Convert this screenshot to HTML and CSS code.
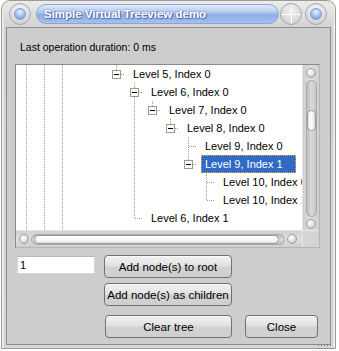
FILE: index.html
```html
<!DOCTYPE html>
<html lang="en">
<head>
    <meta charset="UTF-8">
    <title>Simple Virtual Treeview demo</title>
    <link rel="stylesheet" href="styles.css">
</head>
<body>
    <div class="window">
        <div class="titlebar">
            <span class="orb"></span>
            <div class="caption">Simple Virtual Treeview demo</div>
            <span class="orb cross"></span>
            <span class="orb"></span>
        </div>

        <div class="client">
            <p class="status">Last operation duration: 0 ms</p>

            <div class="treebox">
                <div class="tree">
                    <div class="row">
                        <span class="c v"></span><span class="c v"></span><span class="c v"></span><span class="c"></span><span class="c"></span>
                        <span class="c ell"><span class="exp"></span></span>
                        <span class="label">Level 5, Index 0</span>
                    </div>
                    <div class="row">
                        <span class="c v"></span><span class="c v"></span><span class="c v"></span><span class="c"></span><span class="c"></span><span class="c"></span>
                        <span class="c tee"><span class="exp"></span></span>
                        <span class="label">Level 6, Index 0</span>
                    </div>
                    <div class="row">
                        <span class="c v"></span><span class="c v"></span><span class="c v"></span><span class="c"></span><span class="c"></span><span class="c"></span><span class="c v"></span>
                        <span class="c ell"><span class="exp"></span></span>
                        <span class="label">Level 7, Index 0</span>
                    </div>
                    <div class="row">
                        <span class="c v"></span><span class="c v"></span><span class="c v"></span><span class="c"></span><span class="c"></span><span class="c"></span><span class="c v"></span><span class="c"></span>
                        <span class="c ell"><span class="exp"></span></span>
                        <span class="label">Level 8, Index 0</span>
                    </div>
                    <div class="row">
                        <span class="c v"></span><span class="c v"></span><span class="c v"></span><span class="c"></span><span class="c"></span><span class="c"></span><span class="c v"></span><span class="c"></span><span class="c"></span>
                        <span class="c tee"></span>
                        <span class="label">Level 9, Index 0</span>
                    </div>
                    <div class="row">
                        <span class="c v"></span><span class="c v"></span><span class="c v"></span><span class="c"></span><span class="c"></span><span class="c"></span><span class="c v"></span><span class="c"></span><span class="c"></span>
                        <span class="c ell"><span class="exp"></span></span>
                        <span class="label sel">Level 9, Index 1</span>
                    </div>
                    <div class="row">
                        <span class="c v"></span><span class="c v"></span><span class="c v"></span><span class="c"></span><span class="c"></span><span class="c"></span><span class="c v"></span><span class="c"></span><span class="c"></span><span class="c"></span>
                        <span class="c tee"></span>
                        <span class="label">Level 10, Index 0</span>
                    </div>
                    <div class="row">
                        <span class="c v"></span><span class="c v"></span><span class="c v"></span><span class="c"></span><span class="c"></span><span class="c"></span><span class="c v"></span><span class="c"></span><span class="c"></span><span class="c"></span>
                        <span class="c ell"></span>
                        <span class="label">Level 10, Index 1</span>
                    </div>
                    <div class="row">
                        <span class="c v"></span><span class="c v"></span><span class="c v"></span><span class="c"></span><span class="c"></span><span class="c"></span>
                        <span class="c ell"></span>
                        <span class="label">Level 6, Index 1</span>
                    </div>
                    <div class="row">
                        <span class="c v"></span><span class="c v"></span><span class="c v"></span>
                    </div>
                </div>

                <div class="vscroll">
                    <span class="knob"></span>
                    <div class="track">
                        <span class="thumb"></span>
                    </div>
                    <span class="knob"></span>
                </div>

                <div class="hscroll">
                    <span class="knob"></span>
                    <div class="track">
                        <span class="thumb"></span>
                    </div>
                    <span class="knob"></span>
                </div>

                <div class="corner"></div>
            </div>

            <div class="controls">
                <input class="count" type="text" value="1">
                <button class="btn">Add node(s) to root</button>
                <button class="btn children">Add node(s) as children</button>
                <button class="btn clear">Clear tree</button>
                <button class="btn close">Close</button>
            </div>
        </div>

        <span class="grip"></span>
    </div>
</body>
</html>
```

FILE: styles.css
```css
body {
    margin: 0;
    background: #ffffff;
    font-family: 'Liberation Sans', Arial, sans-serif;
    font-size: 11px;
    color: #000;
}

.window {
    position: relative;
    box-sizing: border-box;
    width: 335px;
    height: 349px;
    margin-left: 1px;
    padding: 0 4px 4px 4px;
    border: 1px solid #9c9c9c;
    border-radius: 9px 9px 0 0;
    background: linear-gradient(#ececec 0, #d2d2d2 27px, #d6d6d6 100%);
    box-shadow: inset 1px 0 0 #f0f0f0, inset -1px 0 0 #f0f0f0, inset 2px 0 0 #e2e2e2, inset -2px 0 0 #e2e2e2;
}

/* title bar */

.titlebar {
    display: flex;
    align-items: center;
    height: 26px;
    padding-left: 3px;
}

.orb {
    position: relative;
    box-sizing: border-box;
    width: 22px;
    height: 22px;
    border-radius: 50%;
    border: 1px solid #a9a9a9;
    background: radial-gradient(circle at 50% 35%, #fafafa 0, #dcdcdc 60%, #bdbdbd 100%);
    flex: none;
}

.orb::after {
    content: "";
    position: absolute;
    left: 4px;
    top: 4px;
    width: 12px;
    height: 12px;
    border-radius: 50%;
    border: 1px solid #7f9ccd;
    box-sizing: border-box;
    background: radial-gradient(circle at 50% 30%, #eef4fe 0, #a9c4ef 45%, #6d93d6 100%);
}

.orb.cross {
    margin-left: 1px;
    margin-right: 3px;
    background:
        linear-gradient(#ffffff, #ffffff) 10px 0 / 1px 100% no-repeat,
        linear-gradient(#ffffff, #ffffff) 0 10px / 100% 1px no-repeat,
        radial-gradient(circle at 50% 35%, #f4f4f4 0, #dadada 60%, #c2c2c2 100%);
}

.orb.cross::after {
    display: none;
}

.caption {
    box-sizing: border-box;
    width: 243px;
    height: 20px;
    margin-left: 5px;
    padding-left: 7px;
    border: 1px solid #8da5cf;
    border-radius: 10px;
    background: linear-gradient(#e2ebfa 0%, #b4c9ee 40%, #8eaee6 55%, #a6c0f0 100%);
    color: #ffffff;
    font-weight: bold;
    font-size: 11.5px;
    line-height: 18px;
    text-shadow: 0 0 2px #4a6aa8, 1px 1px 1px #4a6aa8;
    white-space: nowrap;
}

/* client area */

.client {
    box-sizing: border-box;
    height: 318px;
    border: 1px solid #8c8c8c;
    background: #cdcdcd;
}

.status {
    margin: 0;
    padding: 12px 0 0 13px;
    font-size: 10.5px;
    line-height: 14px;
}

.treebox {
    display: grid;
    grid-template-columns: 1fr 17px;
    grid-template-rows: 165px 17px;
    box-sizing: border-box;
    width: 305px;
    height: 184px;
    margin: 10px 0 0 8px;
    border: 1px solid #8a8a8a;
    border-right-color: #b4b4b4;
    border-bottom-color: #b4b4b4;
}

.tree {
    background: #ffffff;
    padding-left: 1px;
    overflow: hidden;
}

.row {
    display: flex;
    height: 18px;
    white-space: nowrap;
}

.c {
    flex: none;
    width: 18px;
    height: 18px;
    background-repeat: no-repeat;
}

.v {
    background-image: repeating-linear-gradient(to bottom, #a29d89 0 1px, transparent 1px 2px);
    background-size: 1px 18px;
    background-position: 9px 0;
}

.tee {
    background-image:
        repeating-linear-gradient(to bottom, #a29d89 0 1px, transparent 1px 2px),
        repeating-linear-gradient(to right, #a29d89 0 1px, transparent 1px 2px);
    background-size: 1px 18px, 8px 1px;
    background-position: 9px 0, 10px 9px;
}

.ell {
    background-image:
        repeating-linear-gradient(to bottom, #a29d89 0 1px, transparent 1px 2px),
        repeating-linear-gradient(to right, #a29d89 0 1px, transparent 1px 2px);
    background-size: 1px 10px, 8px 1px;
    background-position: 9px 0, 10px 9px;
}

.exp {
    display: block;
    box-sizing: border-box;
    width: 9px;
    height: 9px;
    margin: 5px 0 0 5px;
    border: 1px solid #9c9a8a;
    background: #ffffff;
    padding: 3px 0 0 1px;
}

.exp::after {
    content: "";
    display: block;
    width: 5px;
    height: 1px;
    background: #000000;
}

.label {
    margin-left: 4px;
    padding: 0 13px 0 4px;
    line-height: 18px;
    box-sizing: border-box;
    height: 18px;
}

.label.sel {
    background: #316ac5;
    color: #ffffff;
    outline: 1px dotted #f2b443;
    outline-offset: -1px;
}

/* scroll bars */

.vscroll {
    display: flex;
    flex-direction: column;
    align-items: center;
    gap: 2px;
    padding-top: 3px;
    background: linear-gradient(to right, #cfcfcf, #dedede 50%, #cfcfcf);
    border-left: 1px solid #e6e6e6;
}

.hscroll {
    display: flex;
    align-items: center;
    gap: 2px;
    padding: 0 5px 0 3px;
    background: linear-gradient(#cfcfcf, #e0e0e0 50%, #cfcfcf);
    border-top: 1px solid #e6e6e6;
}

.knob {
    flex: none;
    box-sizing: border-box;
    width: 10px;
    height: 10px;
    border-radius: 50%;
    border: 1px solid #9e9e9e;
    background: radial-gradient(circle at 40% 35%, #ffffff 0, #e4e4e4 45%, #b2b2b2 100%);
}

.track {
    box-sizing: border-box;
    border: 1px solid #a8a8a8;
    border-radius: 6px;
}

.vscroll .track {
    width: 11px;
    height: 137px;
    padding-top: 29px;
    background: linear-gradient(to right, #bdbdbd, #dadada 50%, #c4c4c4);
}

.hscroll .track {
    flex: 1;
    height: 11px;
    padding-left: 2px;
    background: linear-gradient(#bdbdbd, #dadada 50%, #c4c4c4);
}

.thumb {
    display: block;
    box-sizing: border-box;
    border: 1px solid #9a9a9a;
    border-radius: 5px;
    background: linear-gradient(to right, #e8e8e8, #ffffff 40%, #f4f4f4 70%, #d8d8d8);
}

.vscroll .thumb {
    width: 9px;
    height: 21px;
}

.hscroll .thumb {
    width: 245px;
    height: 9px;
    background: linear-gradient(#ffffff, #fbfbfb 50%, #e2e2e2);
}

.corner {
    background: #d4d4d4;
    border-left: 1px solid #e6e6e6;
    border-top: 1px solid #e6e6e6;
}

/* buttons */

.controls {
    display: grid;
    grid-template-columns: 78px 128px 73px;
    grid-template-rows: 23px 23px 23px;
    column-gap: 9px;
    row-gap: 5px;
    margin: 7px 0 0 10px;
}

.count {
    box-sizing: border-box;
    width: 78px;
    height: 18px;
    margin: 1px 0 0 0;
    padding: 0 2px;
    border: 1px solid #d8d8d8;
    border-top-color: #b8b8b8;
    background: #ffffff;
    font-family: inherit;
    font-size: 11px;
    outline: none;
}

.btn {
    box-sizing: border-box;
    height: 23px;
    padding: 0;
    border: 1px solid #717171;
    border-radius: 4px;
    background: linear-gradient(#f2f2f2 0%, #e2e2e2 45%, #d2d2d2 55%, #cfcfcf 100%);
    box-shadow: inset 0 1px 0 #fbfbfb;
    font-family: inherit;
    font-size: 11.5px;
    color: #000000;
    grid-column: 2;
}

.btn.children {
    grid-row: 2;
}

.btn.clear {
    grid-row: 3;
    margin-top: 4px;
    margin-left: 1px;
}

.btn.close {
    grid-row: 3;
    grid-column: 3;
    margin: 4px 0 0 4px;
    width: 73px;
}

.grip {
    position: absolute;
    right: 4px;
    bottom: -1px;
    width: 14px;
    height: 5px;
    background: radial-gradient(circle, #7a7a7a 0 0.8px, transparent 1px) 0 0 / 3px 3px;
}
```
